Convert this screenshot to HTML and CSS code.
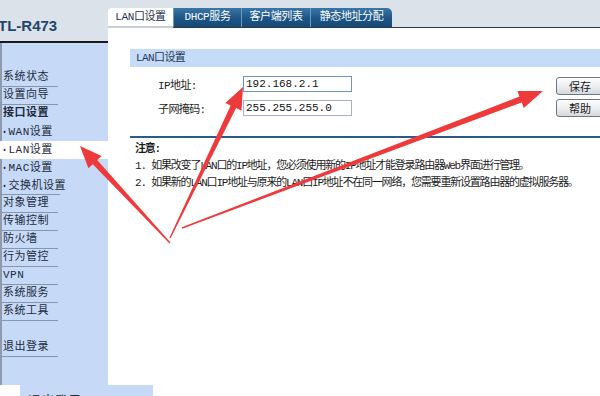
FILE: index.html
```html
<!DOCTYPE html>
<html lang="zh-CN">
<head>
  <meta charset="UTF-8">
  <meta name="viewport" content="width=device-width, initial-scale=1.0">
  <title>TL-R473 LAN口设置</title>
  <link rel="stylesheet" href="styles.css">
</head>
<body>
  <div class="frame">
    <aside class="sidebar">
      <div class="brand">TL-R473</div>
      <ul class="menu">
        <li class="menu-item">系统状态</li>
        <li class="menu-item">设置向导</li>
        <li class="menu-group">接口设置</li>
        <li class="sub-item">WAN设置</li>
        <li class="sub-item active">LAN设置</li>
        <li class="sub-item">MAC设置</li>
        <li class="sub-item last">交换机设置</li>
        <li class="menu-item">对象管理</li>
        <li class="menu-item">传输控制</li>
        <li class="menu-item">防火墙</li>
        <li class="menu-item">行为管控</li>
        <li class="menu-item">VPN</li>
        <li class="menu-item">系统服务</li>
        <li class="menu-item">系统工具</li>
        <li class="menu-spacer"></li>
        <li class="menu-item">退出登录</li>
      </ul>
    </aside>

    <main class="main">
      <div class="tabbar">
        <div class="tab current">LAN口设置</div>
        <div class="tab">DHCP服务</div>
        <div class="tab">客户端列表</div>
        <div class="tab last">静态地址分配</div>
      </div>

      <div class="content">
        <div class="section-title">LAN口设置</div>

        <div class="form-area">
          <div class="fields">
            <div class="field">
              <label class="field-label">IP地址:</label>
              <input class="field-input focused" type="text" value="192.168.2.1">
            </div>
            <div class="field">
              <label class="field-label">子网掩码:</label>
              <input class="field-input" type="text" value="255.255.255.0">
            </div>
          </div>
          <div class="actions">
            <button class="btn">保存</button>
            <button class="btn">帮助</button>
          </div>
        </div>

        <div class="notes">
          <div class="notes-title">注意:</div>
          <p>1. 如果改变了LAN口的IP地址，您必须使用新的IP地址才能登录路由器Web界面进行管理。</p>
          <p>2. 如果新的LAN口IP地址与原来的LAN口IP地址不在同一网络，您需要重新设置路由器的虚拟服务器。</p>
        </div>
      </div>
    </main>
  </div>

  <div class="footer-strip">退出登录</div>

  <!-- red annotation arrows drawn over the screenshot -->
  <svg class="arrows" width="600" height="396" viewBox="0 0 600 396">
    <polygon points="170.5,242.5 97.2,160.1 101.6,156.0 80,146 88.4,168.3 92.8,164.2 169.5,243.5" />
    <polygon points="170.6,238.3 236.1,108.1 241.5,110.7 243,87 225.3,102.9 230.7,105.5 169.4,237.7" />
    <polygon points="182.2,228.7 521.7,102.5 523.8,107.9 543,91 517.4,91.1 519.4,96.5 181.8,227.3" />
  </svg>
</body>
</html>
```

FILE: styles.css
```css
body {
  margin: 0;
  width: 600px;
  height: 396px;
  overflow: hidden;
  position: relative;
  background-color: #fff;
  font-family: "Liberation Mono", "Noto Sans CJK SC", monospace;
  font-size: 11px;
  color: #1c1c1c;
}

.frame {
  display: flex;
  height: 385px;
}

/* left menu */
.sidebar {
  width: 108px;
  flex-shrink: 0;
  display: flex;
  flex-direction: column;
  background-color: #c6daf8;
}

.brand {
  height: 43px;
  box-sizing: border-box;
  padding-top: 17px;
  margin-left: -2px;
  line-height: 18px;
  background-color: #dce2ea;
  border-bottom: 2px solid #1a1a1a;
  font-family: "Liberation Sans", Arial, sans-serif;
  font-weight: bold;
  font-size: 15px;
  color: #24466b;
}

.menu {
  flex: 1;
  list-style: none;
  margin: 0;
  padding: 26px 0 0;
  border-left: 2px solid #8f9baa;
  letter-spacing: 0.5px;
  color: #1d2b3c;
}

.menu-item,
.menu-group {
  width: 55px;
  height: 17px;
  line-height: 17px;
  padding-left: 1px;
  border-bottom: 1px solid #8797ab;
  white-space: nowrap;
}

.menu-group {
  font-weight: bold;
  border-bottom: none;
  height: 18px;
}

.sub-item {
  height: 18px;
  line-height: 18px;
  padding-left: 1px;
  white-space: nowrap;
}

.sub-item::before {
  content: "•";
  margin-right: 2px;
  font-family: "Noto Sans", sans-serif;
  font-size: 8px;
}

.sub-item.last {
  width: 57px;
  height: 17px;
  border-bottom: 1px solid #8797ab;
}

.sub-item.active {
  background-color: #fff;
  margin-left: -2px;
  padding-left: 3px;
}

.menu-spacer {
  height: 18px;
}

/* main area */
.main {
  flex: 1;
  display: flex;
  flex-direction: column;
}

.tabbar {
  height: 28px;
  box-sizing: border-box;
  display: flex;
  align-items: flex-end;
  background-color: #dce2ea;
  border-bottom: 1px solid #2a3848;
}

.tab {
  height: 19px;
  line-height: 19px;
  box-sizing: border-box;
  text-align: center;
  letter-spacing: -0.4px;
  color: #fff;
  background: linear-gradient(#3a76a6, #1c5585 55%, #174b77);
  border-left: 1px solid #6f97bb;
}

.tab:nth-child(2) { width: 68px; }
.tab:nth-child(3) { width: 69px; }
.tab:nth-child(4) { width: 82px; }

.tab.current {
  width: 65px;
  margin-bottom: -1px;
  height: 20px;
  border-left: none;
  border-radius: 4px 0 0 0;
  background: #fff;
  color: #1e3450;
  box-shadow: inset 0 -2px 0 #c9ced6;
}

.tab.last {
  border-radius: 0 5px 0 0;
}

.content {
  padding: 21px 0 0 22px;
}

.section-title {
  height: 18px;
  line-height: 18px;
  padding-left: 6px;
  background-color: #c6dbf7;
  color: #1f3a5a;
  letter-spacing: -0.6px;
}

.form-area {
  display: flex;
  padding-top: 9px;
}

.fields {
  display: flex;
  flex-direction: column;
  gap: 8px;
  padding-left: 28px;
}

.field {
  display: flex;
  align-items: center;
}

.field-label {
  width: 85px;
  letter-spacing: -0.6px;
}

.field-input {
  width: 109px;
  height: 16px;
  box-sizing: border-box;
  padding: 0 2px;
  border: 1px solid #a9b3bf;
  font-family: "Liberation Mono", monospace;
  font-size: 11px;
  letter-spacing: 0;
  color: #111;
}

.field-input.focused {
  border-color: #6f93c2;
}

.actions {
  margin-left: auto;
  margin-right: -4px;
  padding-top: 1px;
  display: flex;
  flex-direction: column;
  gap: 4px;
}

.btn {
  width: 48px;
  height: 18px;
  padding: 0;
  border: 1px solid #6b7786;
  border-radius: 3px;
  background: linear-gradient(#fdfdfd, #e9ebee 60%, #d5d8dc);
  font-family: "Noto Sans CJK SC", sans-serif;
  font-size: 11px;
  color: #1a1a1a;
}

.notes {
  margin-top: 19px;
  border-top: 2px solid #2d5b87;
  padding: 3px 0 0 5px;
  letter-spacing: -1.2px;
  line-height: 17px;
}

.notes-title {
  font-weight: bold;
}

.notes p {
  margin: 0;
  white-space: nowrap;
}

.footer-strip {
  width: 125px;
  height: 2px;
  margin-left: 20px;
  padding: 9px 0 0 8px;
  box-sizing: content-box;
  background-color: #c6daf8;
  font-size: 13px;
  letter-spacing: 0.5px;
  line-height: 16px;
  color: #1d2b3c;
}

.arrows {
  position: absolute;
  left: 0;
  top: 0;
  pointer-events: none;
}

.arrows polygon {
  fill: #ee3a3a;
}
```
